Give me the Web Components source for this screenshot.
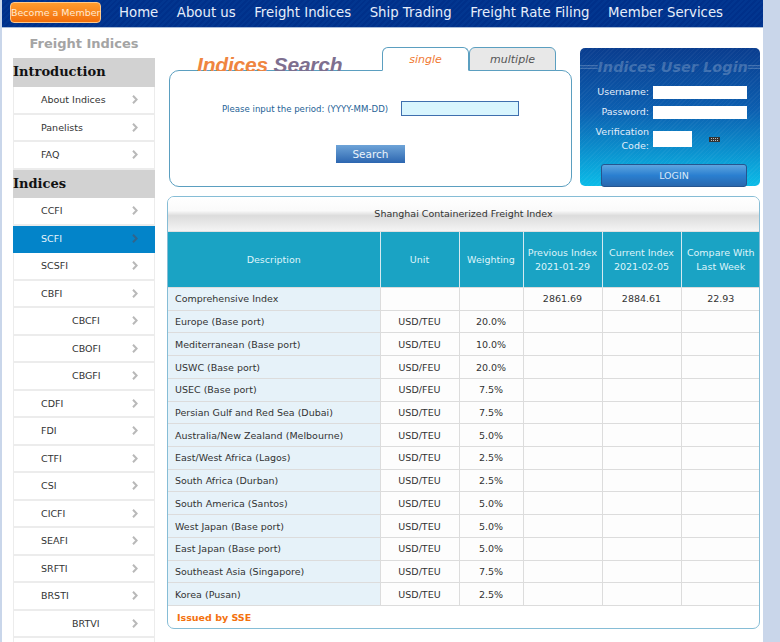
<!DOCTYPE html>
<html>
<head>
<meta charset="utf-8">
<title>Freight Indices</title>
<style>
  html, body { margin: 0; height: 642px; overflow: hidden; background: #c9d6ea; }
  body { font-family: "DejaVu Sans", Verdana, sans-serif; }
</style>
</head>
<body>
<freight-page></freight-page>
<script>
const FONT = `"DejaVu Sans", Verdana, sans-serif`;

class TopBar extends HTMLElement {
  connectedCallback() {
    const links = ["Home", "About us", "Freight Indices", "Ship Trading", "Freight Rate Filing", "Member Services"];
    this.attachShadow({ mode: "open" }).innerHTML = `
      <style>
        :host {
          display: flex;
          align-items: center;
          height: 27px;
          border-bottom: 1px solid #a9bcd8;
          padding-left: 8px;
          background: repeating-linear-gradient(135deg, #00308a 0 2px, #023690 2px 4px);
          font-family: ${FONT};
        }
        .join {
          width: 89px;
          height: 19px;
          margin-top: -3px;
          margin-right: 18px;
          border: 1px solid #ffc98a;
          border-radius: 4px;
          background: linear-gradient(#ff9c2e, #f26f0c);
          color: #ffe9d2;
          font-size: 9.5px;
          line-height: 19px;
          text-align: center;
          white-space: nowrap;
        }
        nav { display: flex; gap: 18.5px; margin-top: -3px; }
        a { color: #e6eefb; font-size: 13.3px; white-space: nowrap; }
      </style>
      <div class="join">Become a Member</div>
      <nav>${links.map((l) => `<a>${l}</a>`).join("")}</nav>
    `;
  }
}

class NavItem extends HTMLElement {
  connectedCallback() {
    this.attachShadow({ mode: "open" }).innerHTML = `
      <style>
        :host {
          display: flex;
          align-items: center;
          justify-content: space-between;
          box-sizing: border-box;
          height: 27.5px;
          padding: 0 16px 0 27px;
          border: 1px solid #ececec;
          border-top-width: 0;
          border-bottom-width: 2px;
          background: #fff;
          color: #333;
          font-size: 9.5px;
        }
        :host([sub]) { padding-left: 58px; }
        :host([active]) { background: #0384c9; border-color: #0384c9; color: #e6f4fc; }
        svg { width: 6px; height: 9px; }
        path { fill: none; stroke: #b9b9b9; stroke-width: 2; }
        :host([active]) path { stroke: #31658c; }
      </style>
      <span><slot></slot></span>
      <svg viewBox="0 0 6 9"><path d="M1 .8 4.6 4.5 1 8.2"/></svg>
    `;
  }
}

class SideNav extends HTMLElement {
  connectedCallback() {
    this.attachShadow({ mode: "open" }).innerHTML = `
      <style>
        :host {
          display: block;
          width: 142px;
          font-family: ${FONT};
        }
        h2 {
          margin: 0;
          height: 30px;
          color: #a4a4a4;
          font-size: 13px;
          line-height: 32px;
          text-align: center;
        }
        h3 {
          margin: 0;
          height: 29px;
          background: #d2d2d2;
          color: #111;
          font: bold 13px/28px "DejaVu Serif", Georgia, serif;
        }
        h3.next { height: 28.5px; }
      </style>
      <h2>Freight Indices</h2>
      <h3>Introduction</h3>
      <slot name="intro"></slot>
      <h3 class="next">Indices</h3>
      <slot></slot>
    `;
  }
}

class SearchPanel extends HTMLElement {
  connectedCallback() {
    this.attachShadow({ mode: "open" }).innerHTML = `
      <style>
        :host {
          display: block;
          width: 403px;
          font-family: ${FONT};
        }
        .head {
          display: flex;
          align-items: flex-end;
          height: 23px;
          margin-bottom: -1px;
          position: relative;
        }
        .logo {
          width: 213px;
          height: 23px;
          overflow: hidden;
          font: italic bold 21px/34px "Liberation Sans", Arial, sans-serif;
          letter-spacing: -.2px;
          padding-left: 28px;
          box-sizing: border-box;
          white-space: nowrap;
        }
        .logo b { color: #ef8540; }
        .logo i { color: #7e6f8f; }
        .tab {
          box-sizing: border-box;
          width: 87px;
          height: 24px;
          border: 1px solid #5b9fc0;
          border-radius: 6px 6px 0 0;
          background: #e8e8e8;
          color: #555;
          font-size: 11px;
          font-style: italic;
          line-height: 23px;
          text-align: center;
        }
        .tab.on {
          background: #fff;
          border-bottom-color: #fff;
          color: #f07a33;
          position: relative;
          z-index: 1;
        }
        .body {
          box-sizing: border-box;
          height: 117px;
          border: 1px solid #5b9fc0;
          border-radius: 10px;
          background: #fff;
          display: flex;
          flex-direction: column;
          align-items: center;
        }
        .row {
          display: flex;
          align-items: center;
          gap: 13px;
          margin-top: 30px;
          color: #255f96;
          font-size: 8.6px;
        }
        .row div {
          box-sizing: border-box;
          width: 118px;
          height: 15px;
          border: 1px solid #3f6fae;
          background: #d8f5fe;
        }
        .go {
          box-sizing: border-box;
          width: 69px;
          height: 18px;
          margin-top: 29px;
          background: linear-gradient(#6ea4d8, #2c66b0);
          color: #eaf3fb;
          font-size: 10.5px;
          line-height: 18px;
          text-align: center;
        }
      </style>
      <div class="head">
        <div class="logo"><b>Indices</b> <i>Search</i></div>
        <div class="tab on">single</div>
        <div class="tab">multiple</div>
      </div>
      <div class="body">
        <div class="row"><span>Please input the period: (YYYY-MM-DD)</span><div></div></div>
        <div class="go">Search</div>
      </div>
    `;
  }
}

class LoginBox extends HTMLElement {
  connectedCallback() {
    this.attachShadow({ mode: "open" }).innerHTML = `
      <style>
        :host {
          display: block;
          box-sizing: border-box;
          width: 180px;
          height: 138px;
          border-radius: 5px;
          background:
            repeating-linear-gradient(135deg, rgba(255,255,255,.04) 0 1px, transparent 1px 3px),
            linear-gradient(#0a3d8f, #0c5fb0 45%, #0bbce8);
          color: #e3eefa;
          font-family: ${FONT};
          font-size: 9.5px;
        }
        .title {
          height: 37px;
          color: rgba(255,255,255,.22);
          font: italic bold 14.5px/38px "DejaVu Sans", Verdana, sans-serif;
          text-align: center;
          white-space: nowrap;
          overflow: hidden;
        }
        .form {
          display: grid;
          grid-template-columns: 69px 94px;
          column-gap: 4px;
          align-items: center;
          row-gap: 6px;
        }
        label { text-align: right; line-height: 14px; }
        .field { height: 13px; background: #fff; }
        .code { display: flex; align-items: center; margin-top: 0; }
        .code div { width: 39px; height: 16px; background: #fff; }
        .code svg { width: 11px; height: 5px; margin-left: 17px; }
        .login {
          box-sizing: border-box;
          width: 146px;
          height: 23px;
          margin: 11px 0 0 21px;
          border: 1px solid #26558f;
          border-radius: 3px;
          background: linear-gradient(#5ea5e0, #2a7fd0 50%, #2a68ae);
          color: #dbe9f7;
          font-size: 9.5px;
          line-height: 22px;
          text-align: center;
        }
      </style>
      <div class="title">══Indices User Login══</div>
      <div class="form">
        <label>Username:</label><div class="field"></div>
        <label>Password:</label><div class="field"></div>
        <label>Verification<br>Code:</label>
        <div class="code"><div></div>
          <svg viewBox="0 0 11 5"><rect width="11" height="5" fill="#333"/><path d="M2 1.5h7M2 3.5h7" stroke="#bbb" stroke-dasharray="1 1"/></svg>
        </div>
      </div>
      <div class="login">LOGIN</div>
    `;
  }
}

class IndexTable extends HTMLElement {
  connectedCallback() {
    const rows = [
      ["Europe (Base port)", "USD/TEU", "20.0%"],
      ["Mediterranean (Base port)", "USD/TEU", "10.0%"],
      ["USWC (Base port)", "USD/FEU", "20.0%"],
      ["USEC (Base port)", "USD/FEU", "7.5%"],
      ["Persian Gulf and Red Sea (Dubai)", "USD/TEU", "7.5%"],
      ["Australia/New Zealand (Melbourne)", "USD/TEU", "5.0%"],
      ["East/West Africa (Lagos)", "USD/TEU", "2.5%"],
      ["South Africa (Durban)", "USD/TEU", "2.5%"],
      ["South America (Santos)", "USD/TEU", "5.0%"],
      ["West Japan (Base port)", "USD/TEU", "5.0%"],
      ["East Japan (Base port)", "USD/TEU", "5.0%"],
      ["Southeast Asia (Singapore)", "USD/TEU", "7.5%"],
      ["Korea (Pusan)", "USD/TEU", "2.5%"],
    ];
    const body = rows
      .map((r) => `<tr><th>${r[0]}</th><td>${r[1]}</td><td>${r[2]}</td><td></td><td></td><td></td></tr>`)
      .join("");
    this.attachShadow({ mode: "open" }).innerHTML = `
      <style>
        :host {
          display: block;
          box-sizing: border-box;
          width: 593px;
          height: 433px;
          border: 1px solid #86bdd6;
          border-radius: 7px;
          background: #fff;
          color: #333;
          font-family: ${FONT};
          font-size: 9.5px;
          overflow: hidden;
        }
        .cap {
          height: 34px;
          background: linear-gradient(#fff 0, #fafafa 40%, #dcdcdc 55%, #f4f4f4 100%);
          line-height: 33px;
          text-align: center;
        }
        table {
          width: 592px;
          table-layout: fixed;
          border-collapse: collapse;
        }
        thead th {
          height: 55px;
          padding: 0;
          background: #1aa3c4;
          color: #dff4fa;
          font-weight: normal;
          line-height: 14px;
          border-left: 1px solid #d5e9f0;
          border-top: 1px solid #e0e0e0;
        }
        thead th:first-child { border-left: 0; }
        tbody tr { height: 22.72px; }
        tbody th, tbody td {
          padding: 0;
          border: 1px solid #dcdcdc;
          text-align: center;
          font-weight: normal;
        }
        tbody th {
          padding-left: 7px;
          background: #e6f2f9;
          border-left: 0;
          text-align: left;
          white-space: nowrap;
        }
        tbody td { background: #fdfdfd; }
        tbody td:last-child { border-right: 0; }
        .foot {
          padding: 6px 0 0 9px;
          color: #f4710e;
          font-weight: bold;
        }
      </style>
      <div class="cap">Shanghai Containerized Freight Index</div>
      <table>
        <colgroup>
          <col style="width:212px"><col style="width:79px"><col style="width:64px">
          <col style="width:79px"><col style="width:79px"><col style="width:79px">
        </colgroup>
        <thead>
          <tr>
            <th>Description</th><th>Unit</th><th>Weighting</th>
            <th>Previous Index<br>2021-01-29</th><th>Current Index<br>2021-02-05</th><th>Compare With<br>Last Week</th>
          </tr>
        </thead>
        <tbody>
          <tr><th>Comprehensive Index</th><td></td><td></td><td>2861.69</td><td>2884.61</td><td>22.93</td></tr>
          ${body}
        </tbody>
      </table>
      <div class="foot">Issued by SSE</div>
    `;
  }
}

class FreightPage extends HTMLElement {
  connectedCallback() {
    const item = (t, a = "") => `<nav-item ${a}>${t}</nav-item>`;
    this.attachShadow({ mode: "open" }).innerHTML = `
      <style>
        :host {
          display: block;
          box-sizing: border-box;
          width: 761px;
          height: 642px;
          margin-left: 2px;
          background: #fff;
          overflow: hidden;
        }
        .cols {
          display: flex;
          align-items: flex-start;
          padding-left: 11px;
        }
        .main {
          margin: 20px 0 0 12px;
        }
        .top {
          display: flex;
          justify-content: space-between;
          width: 593px;
          padding-left: 2px;
          box-sizing: border-box;
          margin-bottom: 9px;
        }
      </style>
      <top-bar></top-bar>
      <div class="cols">
        <side-nav>
          <div slot="intro">
            ${item("About Indices")}${item("Panelists")}${item("FAQ")}
          </div>
          ${item("CCFI")}${item("SCFI", "active")}${item("SCSFI")}${item("CBFI")}
          ${item("CBCFI", "sub")}${item("CBOFI", "sub")}${item("CBGFI", "sub")}
          ${item("CDFI")}${item("FDI")}${item("CTFI")}${item("CSI")}${item("CICFI")}
          ${item("SEAFI")}${item("SRFTI")}${item("BRSTI")}${item("BRTVI", "sub")}${item("&nbsp;")}
        </side-nav>
        <div class="main">
          <div class="top">
            <search-panel></search-panel>
            <login-box></login-box>
          </div>
          <index-table></index-table>
        </div>
      </div>
    `;
  }
}

customElements.define("top-bar", TopBar);
customElements.define("nav-item", NavItem);
customElements.define("side-nav", SideNav);
customElements.define("search-panel", SearchPanel);
customElements.define("login-box", LoginBox);
customElements.define("index-table", IndexTable);
customElements.define("freight-page", FreightPage);
</script>
</body>
</html>
